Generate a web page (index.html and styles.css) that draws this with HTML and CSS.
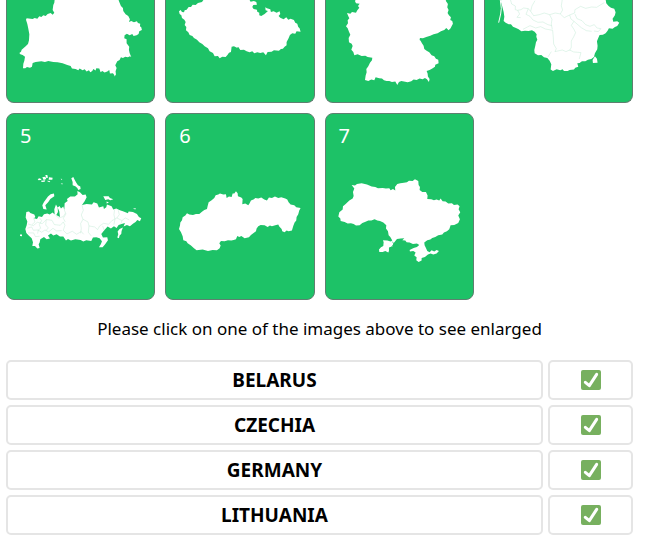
FILE: index.html
```
<!DOCTYPE html>
<html lang="en">
<head>
    <meta charset="UTF-8">
    <meta name="viewport" content="width=device-width, initial-scale=1.0">
    <title>Match the Countries</title>
    <link rel="stylesheet" href="styles.css">
</head>
<body>
    <main class="game">
        <div class="cards">
            <button type="button" class="card card-short" aria-label="Image 1">
                <svg viewBox="21 0 442 306" aria-hidden="true">
                    <path d="M165 -10 L163 8 160 15 158 30 163 38 158 44 152 39 143 42 137 48 130 46 124 51 118 49 112 56 104 54 98 57 80 55 78 59 82 72 85 86 88 103 87 121 84 132 77 139 71 144 65 149 63 155 58 159 61 163 68 165 75 170 73 182 70 191 69 205 76 205 81 201 90 203 96 200 98 189 107 186 124 184 135 186 145 183 160 186 173 187 188 190 202 195 212 198 216 206 227 207 235 211 239 206 248 211 254 208 260 215 267 211 271 217 277 213 280 207 287 212 289 205 298 206 302 217 307 213 314 218 322 215 328 210 330 221 339 220 343 225 344 230 348 224 347 214 350 204 346 196 352 184 359 180 363 172 369 174 376 170 384 172 390 169 394 171 389 159 387 149 388 140 380 130 380 118 373 115 374 106 381 101 389 106 397 102 401 108 410 106 416 102 418 94 426 90 424 82 420 79 421 71 414 69 411 64 402 67 394 63 387 66 390 58 385 48 377 43 370 33 369 24 363 18 359 8 352 -10Z"/>
                </svg>
            </button>
            <button type="button" class="card card-short" aria-label="Image 2">
                <svg viewBox="19 0 442 306" aria-hidden="true">
                    <path d="M137 -8 L127 6 115 9 108 15 99 14 94 21 87 21 81 29 75 31 73 37 67 36 63 30 58 34 60 42 65 46 67 54 74 59 78 66 75 75 80 81 79 91 86 97 90 105 98 108 103 114 112 119 119 127 128 132 135 139 145 145 150 154 160 159 165 169 175 168 180 175 188 170 198 171 204 164 208 158 214 156 216 140 223 139 232 143 236 141 242 150 253 149 261 154 270 157 278 154 284 160 293 157 302 159 311 157 319 166 324 156 336 155 343 151 358 152 364 147 370 146 375 140 381 136 381 126 387 115 391 105 398 100 407 101 411 94 423 95 420 85 416 81 413 71 407 68 403 60 393 56 386 59 380 52 372 58 362 53 357 48 362 42 360 34 351 38 342 34 334 36 332 28 322 25 317 22 318 31 325 33 315 42 305 48 299 46 299 38 293 35 292 29 282 27 278 21 281 15 292 14 290 6 283 3 273 5 265 -8Z"/>
                </svg>
            </button>
            <button type="button" class="card card-short" aria-label="Image 3">
                <svg viewBox="17 0 442 306" aria-hidden="true">
                    <path d="M111 -8 L104 3 107 10 118 11 113 18 117 23 111 31 107 38 95 36 90 41 80 39 84 49 87 55 82 61 83 70 77 79 82 85 86 95 90 104 85 114 86 127 94 131 97 138 93 149 99 156 102 166 112 163 124 168 135 167 142 171 156 173 155 181 149 188 144 199 138 207 139 217 136 227 134 240 144 243 153 239 162 241 166 232 177 235 185 236 191 241 199 243 207 243 215 246 225 245 231 255 236 246 243 243 251 245 262 247 273 244 280 239 289 240 298 236 307 238 314 234 320 238 326 246 328 237 323 230 322 221 319 213 328 210 336 206 344 200 345 194 355 190 354 179 347 176 342 169 334 166 327 157 319 152 312 147 310 137 305 130 301 122 298 120 299 114 308 115 318 111 330 107 340 103 352 100 362 94 372 90 378 84 385 91 391 85 394 79 398 71 396 63 390 60 392 52 386 46 382 39 385 30 381 22 383 12 377 3 376 -8Z"/>
                </svg>
            </button>
            <button type="button" class="card card-short" aria-label="Image 4">
                <svg viewBox="14 0 442 306" aria-hidden="true">
                    <path d="M63 -8 L62 6 66 20 70 36 72 50 70 63 76 68 85 73 92 73 98 80 107 84 115 88 123 94 134 92 145 93 155 91 163 95 169 103 168 110 171 119 167 127 165 137 162 150 163 160 173 166 183 165 191 172 201 174 208 182 213 193 211 209 218 213 229 208 240 211 247 208 251 213 262 213 268 210 281 209 285 203 294 200 291 190 298 189 305 184 315 184 323 179 333 177 341 171 344 160 351 148 352 137 350 124 354 114 358 105 368 104 376 100 382 92 386 85 397 86 404 81 411 78 417 68 411 64 399 65 397 56 404 46 406 37 402 26 392 23 385 18 378 10 375 -8Z"/>
                    <path d="M344 169 L350 176 352 188 338 189 337 180Z"/>
                    <path class="inlet" d="M60 0 L63 25 61 42 55 68"/>
                    <path class="regions" d="M90 -2 L94 12 105 18 105 29 112 31 122 29 130 24 144 26 151 34 M151 34 L155 18 164 2 M151 34 L160 47 177 44 192 39 208 44 225 39 240 42 247 30 243 18 246 -2 M112 31 L118 42 110 52 121 53 M144 26 L137 43 149 49 158 60 173 67 188 66 203 74 214 77 M240 42 L252 53 268 45 272 57 281 64 273 76 281 88 286 98 280 111 273 123 273 142 268 152 M208 44 L215 58 213 72 216 88 M128 88 L149 77 166 84 181 80 195 87 217 91 219 112 220 132 228 146 224 155 246 150 257 155 268 150 280 156 293 157 302 158 297 177 M268 45 L283 39 284 29 301 19 316 25 334 21 349 22 362 14 372 8 M284 42 L290 56 305 62 316 74 329 79 342 74 350 84 362 86 354 95 341 93 M281 64 L303 83 318 92 334 94 M213 155 L203 171"/>
                </svg>
            </button>
            <button type="button" class="card">
                <span class="number">5</span>
                <svg viewBox="21 18 442 555" aria-hidden="true">
                    <path d="M79 312 L87 311 91 315 103 320 106 327 102 331 111 333 116 325 126 327 132 319 142 317 149 320 158 314 164 320 163 304 168 290 173 299 174 312 169 321 180 327 178 311 173 299 179 294 183 302 190 296 193 306 194 286 203 279 201 273 211 266 225 266 233 259 232 249 240 253 248 261 257 260 260 268 254 280 246 291 260 288 276 290 281 283 292 287 297 299 310 295 312 303 319 298 321 290 335 295 340 305 349 302 360 307 371 311 384 316 386 311 399 312 411 318 417 327 424 331 420 340 412 336 407 342 400 347 390 355 381 351 371 356 375 345 365 348 356 351 350 360 342 355 333 362 323 356 313 367 304 378 309 389 322 388 324 397 315 410 308 418 297 418 303 408 306 400 299 391 289 388 279 389 274 399 259 397 250 401 242 396 226 394 213 398 204 393 198 398 190 386 180 386 170 379 160 383 153 377 144 383 150 392 140 394 132 387 121 394 119 404 116 409 119 420 112 422 105 414 97 414 99 403 95 391 86 383 79 375 76 363 80 352 82 341 77 329Z"/>
                    <path d="M162 257 L152 259 144 266 138 274 132 282 127 292 130 303 140 305 136 292 145 282 151 273 163 265Z"/>
                    <path d="M220 207 L214 211 218 222 218 232 226 235 232 240 235 246 242 243 241 236 234 232 229 224 224 215Z"/>
                    <path d="M310 265 L326 265 330 270 340 274 331 277 325 274 316 276Z M320 281 L327 284 320 287Z M399 302 L408 301 406 305Z M369 359 L365 369 364 378 359 383 357 391 352 389 355 379 353 371 359 363Z M60 380 L66 380 66 385 60 384Z"/>
                    <path d="M113 213 L120 211 125 215 116 217Z M127 208 L136 206 139 213 131 216Z M136 201 L142 201 144 209 139 210Z M147 208 L158 209 157 215 146 215Z M123 218 L136 217 134 221 125 222Z M140 218 L151 219 148 223Z M182 212 L187 213 185 216Z M182 227 L188 226 187 230Z"/>
                    <path class="regions" d="M84 348 L100 353 112 343 127 347 139 335 156 337 163 350 181 352 190 342 195 352 190 367 201 378 217 370 230 379 244 371 251 379 M82 361 L95 357 100 367 114 366 125 373 135 366 146 372 159 361 170 369 185 368 M84 375 L101 375 106 386 119 385 M100 329 L105 342 96 350 M118 329 L125 338 118 350 122 361 115 366 113 377 M139 335 L137 351 145 360 138 368 M166 321 L176 330 190 326 196 316 M193 306 L198 318 190 331 196 342 M246 291 L250 307 244 321 249 334 242 347 244 362 242 376 M249 334 L264 342 267 354 284 357 293 365 299 354 311 346 326 349 336 338 M267 354 L265 373 274 384 M313 367 L308 354 M336 338 L351 330 358 320 355 307 M344 305 L342 320 345 334 342 350 M351 330 L366 338 376 330 388 336 M366 338 L363 348"/>
                </svg>
            </button>
            <button type="button" class="card">
                <span class="number">6</span>
                <svg viewBox="19 18 442 555" aria-hidden="true">
                    <path d="M82 316 L89 320 100 321 109 318 119 318 126 312 134 306 142 303 144 294 147 283 155 278 164 270 168 262 176 260 181 257 191 260 199 259 201 270 208 266 216 267 219 257 224 257 229 250 234 256 235 265 245 269 249 273 248 289 257 287 266 292 270 286 274 278 283 274 287 270 296 272 305 269 314 275 322 278 328 269 337 270 346 266 356 270 365 268 377 272 383 275 387 283 393 290 404 292 410 298 423 300 419 308 416 319 411 327 410 338 405 344 401 354 397 368 387 370 381 368 375 373 368 370 366 363 359 356 356 350 347 352 337 355 331 353 324 357 315 352 303 351 296 355 291 362 289 370 280 377 274 381 268 388 255 391 245 384 239 387 233 384 229 394 222 396 215 398 205 397 195 400 184 399 179 406 183 413 180 421 172 427 159 426 145 429 129 425 111 427 103 421 94 413 84 406 80 400 71 397 69 385 64 373 58 363 61 353 62 344 67 337 69 328 77 323Z"/>
                </svg>
            </button>
            <button type="button" class="card">
                <span class="number">7</span>
                <svg viewBox="17 18 442 555" aria-hidden="true">
                    <path d="M94 231 L104 233 110 228 124 226 140 230 154 236 165 237 173 241 187 240 197 242 207 241 211 247 218 243 225 248 224 237 231 228 240 226 251 224 260 223 266 218 277 219 284 214 294 219 295 231 299 237 298 246 306 252 317 252 322 263 321 273 333 274 341 277 349 275 357 278 361 272 367 280 376 281 384 287 395 286 401 291 412 290 418 295 415 304 420 313 414 323 419 334 414 345 402 351 391 352 387 364 380 370 371 374 366 380 354 382 345 387 336 390 330 395 321 397 312 404 313 412 317 420 321 429 328 433 334 427 342 431 349 426 356 429 349 437 339 440 331 437 323 440 314 447 304 450 304 458 295 462 288 457 289 448 282 443 286 434 279 429 269 431 268 426 280 420 290 417 297 411 290 407 278 408 268 404 259 403 255 398 246 397 252 391 241 392 230 393 224 401 219 407 217 415 206 419 206 429 204 434 195 429 187 432 177 432 176 425 182 418 189 414 190 403 188 397 201 398 211 401 216 398 210 387 205 382 203 370 197 362 198 352 189 344 179 339 171 338 163 334 153 338 144 338 134 342 126 345 118 352 107 353 100 348 92 346 82 347 73 342 61 339 60 332 54 326 57 313 67 305 68 295 76 288 87 278 97 272 100 264 98 252 102 242Z"/>
                    <path class="river" d="M216 401 L221 408 214 416"/>
                </svg>
            </button>
        </div>

        <p class="hint">Please click on one of the images above to see enlarged</p>

        <!-- tick shape is shared by every answer button -->
        <svg class="defs" aria-hidden="true">
            <symbol id="tick" viewBox="0 0 60 60">
                <rect width="60" height="60" rx="6" fill="#77b05f"/>
                <path d="M13 37 L25 47 L47 13" fill="none" stroke="#fff" stroke-width="9" stroke-linecap="round" stroke-linejoin="round"/>
            </symbol>
        </svg>

        <ul class="answers">
            <li class="answer">
                <span class="country">BELARUS</span>
                <button type="button" class="check" aria-label="Check Belarus"><svg><use href="#tick"/></svg></button>
            </li>
            <li class="answer">
                <span class="country">CZECHIA</span>
                <button type="button" class="check" aria-label="Check Czechia"><svg><use href="#tick"/></svg></button>
            </li>
            <li class="answer">
                <span class="country">GERMANY</span>
                <button type="button" class="check" aria-label="Check Germany"><svg><use href="#tick"/></svg></button>
            </li>
            <li class="answer">
                <span class="country">LITHUANIA</span>
                <button type="button" class="check" aria-label="Check Lithuania"><svg><use href="#tick"/></svg></button>
            </li>
        </ul>
    </main>
</body>
</html>
```
FILE: styles.css
```
* {
    box-sizing: border-box;
}
body {
    margin: 0;
    background: #fff;
    color: #000;
    font-family: "Segoe UI", "Noto Sans", sans-serif;
}
.game {
    padding: 0 16px 0 6px;
}
.cards {
    display: grid;
    grid-template-columns: repeat(4, 1fr);
    gap: 10px;
}
.card {
    position: relative;
    padding: 0;
    background: #1dc267;
    border: 1px solid #5f7f70;
    border-radius: 8px;
    color: #fff;
    font-family: inherit;
    cursor: pointer;
}
.card-short {
    border-top: none;
    border-radius: 0 0 8px 8px;
}
.card svg {
    display: block;
    width: 100%;
    fill: #fff;
}
.card .regions {
    fill: none;
    stroke: #a8e2c2;
    stroke-width: 1;
}
.card .inlet {
    fill: none;
    stroke: #fff;
    stroke-width: 3;
}
.card .river {
    fill: none;
    stroke: #1dc267;
    stroke-width: 2;
}
.number {
    position: absolute;
    top: 9px;
    left: 13px;
    font-size: 20px;
    line-height: 26px;
}
.hint {
    margin: 16px 0 18px;
    font-size: 17px;
    line-height: 26px;
    text-align: center;
}
.defs {
    display: none;
}
.answers {
    display: grid;
    gap: 5px;
    margin: 0;
    padding: 0;
    list-style: none;
}
.answer {
    display: grid;
    grid-template-columns: 1fr 85px;
    gap: 5px;
}
.country,
.check {
    display: flex;
    align-items: center;
    justify-content: center;
    height: 40px;
    background: #fff;
    border: 2px solid #e5e5e5;
    border-radius: 5px;
}
.country {
    padding-top: 1px;
    font-size: 19px;
    font-weight: 700;
}
.check {
    padding: 0;
    cursor: pointer;
}
.check svg {
    width: 20px;
    height: 20px;
}
```
